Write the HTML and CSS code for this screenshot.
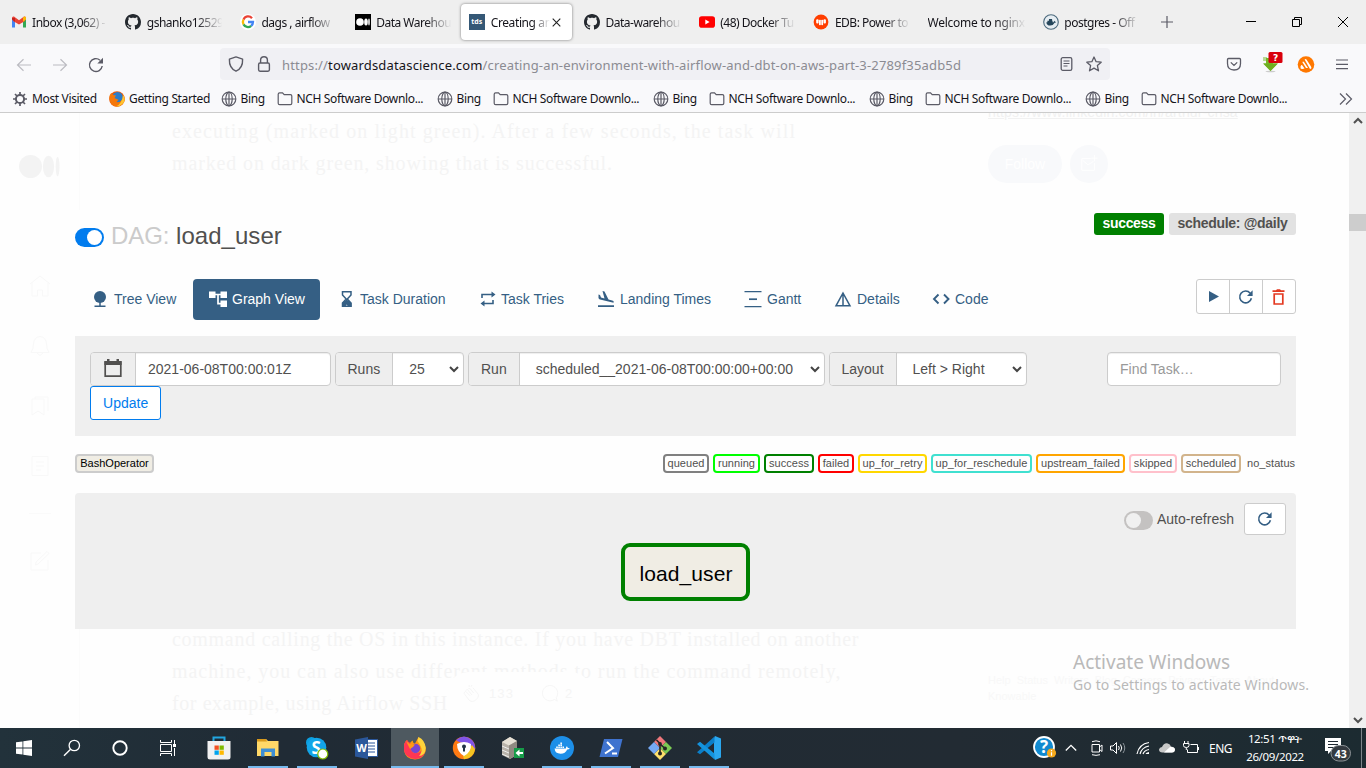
FILE: index.html
```html
<!DOCTYPE html>
<html lang="en">
<head>
<meta charset="utf-8">
<title>Creating an environment with Airflow and DBT on AWS</title>
<link rel="stylesheet" href="styles.css">
</head>
<body>
<svg class="defs" width="0" height="0">
  <symbol id="globe" viewBox="0 0 16 16"><g fill="none" stroke="#5b5b66" stroke-width="1.2"><circle cx="8" cy="8" r="6.8"/><ellipse cx="8" cy="8" rx="3.2" ry="6.8"/><path d="M1.2 8h13.6M8 1v14"/></g></symbol>
  <symbol id="folder" viewBox="0 0 16 16"><path d="M1.2 12.3V3.2Q1.2 1.8 2.6 1.8H5.5L7.2 3.6H13.4Q14.8 3.6 14.8 5V12.3Q14.8 13.6 13.4 13.6H2.6Q1.2 13.6 1.2 12.3Z" fill="none" stroke="#5b5b66" stroke-width="1.2"/></symbol>
  <symbol id="github" viewBox="0 0 16 16"><path fill="#24292f" d="M8 0C3.58 0 0 3.58 0 8c0 3.54 2.29 6.53 5.47 7.59.4.07.55-.17.55-.38 0-.19-.01-.82-.01-1.49-2.01.37-2.53-.49-2.69-.94-.09-.23-.48-.94-.82-1.13-.28-.15-.68-.52-.01-.53.63-.01 1.08.58 1.23.82.72 1.21 1.87.87 2.33.66.07-.52.28-.87.51-1.07-1.78-.2-3.64-.89-3.64-3.95 0-.87.31-1.59.82-2.15-.08-.2-.36-1.02.08-2.12 0 0 .67-.21 2.2.82.64-.18 1.32-.27 2-.27s1.36.09 2 .27c1.53-1.04 2.2-.82 2.2-.82.44 1.1.16 1.92.08 2.12.51.56.82 1.27.82 2.15 0 3.07-1.87 3.75-3.65 3.95.29.25.54.73.54 1.48 0 1.07-.01 1.93-.01 2.2 0 .21.15.46.55.38A8.01 8.01 0 0 0 16 8c0-4.42-3.58-8-8-8z"/></symbol>
  <symbol id="redo" viewBox="0 0 16 16"><path d="M13.4 9.3A5.9 5.9 0 1 1 12.2 4.2" fill="none" stroke="currentColor" stroke-width="1.6"/><path d="M14.6 1.2V7H9Z" fill="currentColor"/></symbol>
  <symbol id="whale" viewBox="0 0 24 24"><path d="M3 12H17.2Q17 10 18.2 9Q19.5 9.8 19.5 11.2Q21 11 22 11.7Q21 13.3 18.8 13.2Q16.5 18.5 10.5 18.5Q3.5 18.5 3 12ZM5 9.3h2v2H5zM7.6 9.3h2v2h-2zM10.2 9.3h2v2h-2zM12.8 9.3h2v2h-2zM7.6 6.9h2v2h-2zM10.2 6.9h2v2h-2zM10.2 4.5h2v2h-2z"/></symbol>
  <symbol id="caret" viewBox="0 0 10 8"><path d="M1 2L5 6L9 2" fill="none" stroke="#444" stroke-width="2"/></symbol>
</svg>
<div class="screen">
  <header class="tabs">
    <div class="tab"><svg class="fav" viewBox="0 0 16 16"><path d="M1 3.5V13.5H4V6.8Z" fill="#4285f4"/><path d="M15 3.5V13.5H12V6.8Z" fill="#34a853"/><path d="M1 4Q1 2 3 2.5L8 6.3L13 2.5Q15 2 15 4L14 7L8 10.5L2 7Z" fill="#ea4335"/><path d="M12 3.5Q15 1.2 15 4.2V5.5L12 7.8Z" fill="#fbbc04"/><path d="M1 4V5.5L4 7.8V4Z" fill="#c5221f"/></svg><span>Inbox (3,062) -</span></div>
    <div class="tab"><svg class="fav"><use href="#github"/></svg><span>gshanko12529</span></div>
    <div class="tab"><svg class="fav" viewBox="0 0 16 16"><circle cx="8" cy="8" r="8" fill="#fff"/><g fill="none" stroke-width="2.3"><path d="M12 4.2A5 5 0 0 0 3.5 5.6" stroke="#ea4335"/><path d="M3.5 5.6A5 5 0 0 0 3.5 10.4" stroke="#fbbc05"/><path d="M3.5 10.4A5 5 0 0 0 11.2 11.8" stroke="#34a853"/><path d="M11.2 11.8A5 5 0 0 0 13 8H8" stroke="#4285f4"/></g></svg><span>dags , airflow</span></div>
    <div class="tab"><svg class="fav" viewBox="0 0 16 16"><path d="M0 0h16v16H0z"/><g fill="#fff"><circle cx="5" cy="8" r="3.8"/><ellipse cx="11" cy="8" rx="1.8" ry="3.6"/><ellipse cx="14" cy="8" rx=".8" ry="3.4"/></g></svg><span>Data Warehou</span></div>
    <div class="tab active"><i class="fav tds">tds</i><span>Creating an</span><svg class="tab-x" viewBox="0 0 9 9"><path d="M.7.7L8.3 8.3M8.3.7L.7 8.3" stroke="#222" stroke-width="1.1"/></svg></div>
    <div class="tab"><svg class="fav"><use href="#github"/></svg><span>Data-warehou</span></div>
    <div class="tab"><svg class="fav" viewBox="0 0 16 16"><rect y="2.3" width="16" height="11.4" rx="2.8" fill="#f00"/><path d="M6.3 5.5V10.5L10.6 8Z" fill="#fff"/></svg><span>(48) Docker Tu</span></div>
    <div class="tab"><svg class="fav" viewBox="0 0 16 16"><circle cx="8" cy="8" r="7.4" fill="#ff3e00"/><g fill="#fff"><rect x="3.2" y="5.2" width="2.4" height="4.4" rx="1"/><rect x="6" y="5.8" width="1.8" height="5.4" rx=".8"/><rect x="8.3" y="5.8" width="1.8" height="5.4" rx=".8"/><rect x="10.5" y="5.2" width="2.4" height="4.4" rx="1"/></g></svg><span>EDB: Power to</span></div>
    <div class="tab plain"><span>Welcome to nginx</span></div>
    <div class="tab"><svg class="fav" viewBox="0 0 16 16"><circle cx="8" cy="8" r="7.3" fill="#e6edf2" stroke="#4c6a7d" stroke-width="1.1"/><g transform="translate(1.8 2) scale(.52)" fill="#24455a"><path d="M3 12H17.2Q17 10 18.2 9Q19.5 9.8 19.5 11.2Q21 11 22 11.7Q21 13.3 18.8 13.2Q16.5 18.5 10.5 18.5Q3.5 18.5 3 12ZM5 9h10v3H5zM8 6h6v4H8z"/></g></svg><span>postgres - Off</span></div>
    <svg class="newtab" viewBox="0 0 12 12"><path d="M6 0V12M0 6H12" stroke="#5b5b66" stroke-width="1.2"/></svg>
    <div class="winctl">
      <svg viewBox="0 0 10 10"><path d="M0 4.5H10" stroke="#000"/></svg>
      <svg viewBox="0 0 10 10"><path d="M.5 2.5H7.5V9.5H.5ZM2.5 2.5V.5H9.5V7.5H7.5" fill="none" stroke="#000"/></svg>
      <svg viewBox="0 0 10 10"><path d="M0 0L10 10M10 0L0 10" stroke="#000"/></svg>
    </div>
  </header>

  <div class="navbar">
    <div class="navbtns">
      <svg width="16" height="16" viewBox="0 0 16 16"><path d="M15 8H1.5M7.5 2.2L1.5 8L7.5 13.8" fill="none" stroke="#bcbcc2" stroke-width="1.2"/></svg>
      <svg width="16" height="16" viewBox="0 0 16 16"><path d="M1 8H14.5M8.5 2.2L14.5 8L8.5 13.8" fill="none" stroke="#bcbcc2" stroke-width="1.2"/></svg>
      <svg width="16" height="16" viewBox="0 0 16 16"><path d="M14.2 9A6.4 6.4 0 1 1 12 3.2" fill="none" stroke="#5b5b66" stroke-width="1.4"/><path d="M15 .8V6.5H9.3Z" fill="#5b5b66"/></svg>
    </div>
    <div class="url">
      <svg width="16" height="16" viewBox="0 0 16 16"><path d="M8 .9L14.6 3.2Q15 12 8 15.2Q1 12 1.4 3.2Z" fill="none" stroke="#5b5b66" stroke-width="1.4" stroke-linejoin="round"/></svg>
      <svg width="16" height="16" viewBox="0 0 16 16"><rect x="2.6" y="7" width="10.8" height="8.2" rx="1.4" fill="none" stroke="#5b5b66" stroke-width="1.4"/><path d="M4.6 7V4Q4.6.8 8 .8T11.4 4V7" fill="none" stroke="#5b5b66" stroke-width="1.4"/></svg>
      <span class="address">https://<b>towardsdatascience.com</b>/creating-an-environment-with-airflow-and-dbt-on-aws-part-3-2789f35adb5d</span>
      <svg width="14" height="16" viewBox="0 0 14 16"><rect x="1.2" y="1.700" width="10.6" height="12.6" rx="1.6" fill="none" stroke="#5b5b66" stroke-width="1.3"/><path d="M3.500 5h6M3.500 7.5h6M3.500 10h4" stroke="#5b5b66" stroke-width="1.1"/></svg>
      <svg width="16" height="16" viewBox="0 0 16 16"><path d="M8 1L10.1 5.7L15.2 6.2L11.4 9.6L12.5 14.8L8 12.1L3.5 14.8L4.6 9.6L.8 6.2L5.9 5.7Z" fill="none" stroke="#5b5b66" stroke-width="1.3" stroke-linejoin="round"/></svg>
    </div>
    <div class="ext">
      <svg width="16" height="16" viewBox="0 0 16 16"><path d="M2.5 1.5H13.5Q14.5 1.5 14.5 2.5V6.5Q14.5 13 8 13Q1.5 13 1.5 6.5V2.5Q1.5 1.5 2.5 1.5ZM4.8 5.4L8 8.4L11.2 5.4" fill="none" stroke="#5b5b66" stroke-width="1.3"/></svg>
      <svg width="24" height="24" viewBox="0 0 24 24"><path d="M3 7.500H6V5H13V10.500H18L10.500 18L3 10.500H6V7.500Z" fill="#76b82a"/><path d="M4 4v4M6 4v4" stroke="#76b82a"/><ellipse cx="10.500" cy="18.500" rx="5" ry=".8" fill="#ccc"/><path d="M3.500 10.500H17.500L10.500 18Z" fill="#6fae1f"/><rect x="8.500" y="-1" width="14" height="11" rx="1.5" fill="#d9000c"/><text x="15.500" y="7.800" text-anchor="middle" class="qm">?</text></svg>
      <svg width="18" height="18" viewBox="0 0 18 18"><circle cx="9" cy="8.500" r="8.3" fill="#ff7800"/><path d="M3.500 10.500Q3 13.500 5.500 13L7.500 12.500L5 9Q4 8.500 3.500 10.500ZM5.500 6.500L9 12L11 12L7 6Q5.500 5 5.500 6.500ZM7.600 3.500L13 13Q15.200 12.500 14 10.500L9.500 3.500Q8.500 2.500 7.600 3.500Z" fill="#fff"/></svg>
      <svg width="14" height="16" viewBox="0 0 14 16"><path d="M3 3h12M3 7.3h12M3 11.6h12" stroke="#5b5b66" stroke-width="1.2"/></svg>
    </div>
  </div>

  <div class="bookmarks">
    <a class="mv"><svg viewBox="0 0 16 16"><circle cx="8" cy="8" r="4.1" fill="none" stroke="#5b5b66" stroke-width="2"/><path d="M8 1v3M8 12v3M1 8h3M12 8h3M3 3l2 2M11 11l2 2M3 13l2-2M11 5l2-2" stroke="#5b5b66" stroke-width="1.7"/></svg>Most Visited</a>
    <a class="gs"><svg viewBox="0 0 16 16"><circle cx="8" cy="8" r="7.8" fill="#e8590c"/><circle cx="8.6" cy="6.2" r="5.3" fill="#2b7cc9"/><path d="M.3 7Q.5 3 2.5 2L4 4L7 4.5L5.5 7L9.5 8.8L7.5 11Q12 12 14 7Q14.6 4 13 2.2Q17 6 15 11Q12 16 7 15.6Q1 14.5.3 7Z" fill="#f5780a"/><path d="M14 4Q17 8 14.5 12Q11 15.8 7 15.4Q13 13 14 4Z" fill="#ffc52f"/></svg>Getting Started</a>
    <a class="bg"><svg><use href="#globe"/></svg>Bing</a><a class="fd"><svg><use href="#folder"/></svg>NCH Software Downlo...</a>
    <a class="bg"><svg><use href="#globe"/></svg>Bing</a><a class="fd"><svg><use href="#folder"/></svg>NCH Software Downlo...</a>
    <a class="bg"><svg><use href="#globe"/></svg>Bing</a><a class="fd"><svg><use href="#folder"/></svg>NCH Software Downlo...</a>
    <a class="bg"><svg><use href="#globe"/></svg>Bing</a><a class="fd"><svg><use href="#folder"/></svg>NCH Software Downlo...</a>
    <a class="bg"><svg><use href="#globe"/></svg>Bing</a><a class="fd"><svg><use href="#folder"/></svg>NCH Software Downlo...</a>
    <svg class="more" viewBox="0 0 14 12"><path d="M1 .5L6.5 6L1 11.5M7 .5L12.5 6L7 11.5" fill="none" stroke="#5b5b66" stroke-width="1.2"/></svg>
  </div>

  <div class="viewport">
    <main class="page">
      <nav class="rail">
        <svg class="mlogo" viewBox="0 0 41 24"><g fill="#f3f3f3"><circle cx="11.5" cy="11.500" r="11.5"/><ellipse cx="29.5" cy="11.500" rx="5.6" ry="10.8"/><ellipse cx="38.6" cy="11.500" rx="1.9" ry="9.8"/></g></svg>
        <svg viewBox="0 0 20 20"><path d="M0 8L10 0L20 8M2 6.5V20H7.5V14H12.5V20H18V6.5"/></svg>
        <svg viewBox="0 0 20 20"><path d="M1 16.5Q3.5 13 3.5 8Q4 1 10 .5Q16 1 16.500 8Q16.500 13 19 16.500ZM7 17L10 19.500L13 17"/></svg>
        <svg viewBox="0 0 20 20"><path d="M2 3H14V19L8 15L2 19ZM5 3V1H18V15"/></svg>
        <svg viewBox="0 0 20 20"><path d="M2 .5H18V19.500H2ZM6 6h8M6 10h8M6 14h5"/></svg>
        <hr>
        <svg viewBox="0 0 20 20"><path d="M11 2H1V19H18V9M6 11L17 .5L19 2.500L8 13L5.500 14Z"/></svg>
      </nav>
      <article class="story">
        <p>executing (marked on light green). After a few seconds, the task will<br><span class="u2">marked on dark green, showing that is successful.</span></p>
        <p class="lower"><span class="l1">command calling the OS in this instance. If you have DBT installed on another</span><br><span class="l2">machine, you can also use different methods to run the command remotely,</span><br><span class="l3">for example, using Airflow SSH</span></p>
        <div class="claps"><svg viewBox="0 0 20 20"><path d="M2 9L8 17Q12 20 16 16T17 9L12 3M2 9L4 7L9 12M4 6L6 5L11 11M7 4L9 4L13 9M8 0v2M11 0l-1 2"/></svg><span>133</span><svg viewBox="0 0 20 20"><path d="M15 16A8.500 8.500 0 1 1 17 14L18 18Z"/></svg><span>2</span></div>
      </article>
      <aside class="side">
        <div class="link">https://www.linkedin.com/in/arthur-chsa</div>
        <div class="follow"><span>Follow</span><i><svg viewBox="0 0 20 20"><path d="M12 4H2V17H16V9M3 6L9 11L15 7M16 0V7M12.500 3.500H19.500"/></svg></i></div>
        <div class="foot">Help&nbsp; Status&nbsp; Writers&nbsp; Blog&nbsp; Careers&nbsp; Privacy&nbsp; Terms&nbsp; About<br>Knowable</div>
      </aside>

      <section class="lightbox">
        <div class="dag-head">
          <span class="switch on"></span>
          <h1><em>DAG:</em> load_user</h1>
          <span class="badge ok">success</span><span class="badge">schedule: @daily</span>
        </div>
        <div class="dag-nav">
          <div class="links">
            <a><svg viewBox="0 0 18 18"><circle cx="9" cy="7" r="6" fill="currentColor"/><path d="M9 12V16M3.500 16.300H14.500" stroke="currentColor" stroke-width="1.500"/></svg>Tree View</a>
            <a class="sel"><svg viewBox="0 0 18 18"><path fill="currentColor" d="M0 1.500H6.500V8H0ZM11.500 1.500H18V8H11.500ZM11.500 10.500H18V17H11.500Z"/><path d="M6 4.500H12M9 4.500V13.700H12" fill="none" stroke="currentColor" stroke-width="1.700"/></svg>Graph View</a>
            <a><svg viewBox="0 0 18 18"><path d="M5.500 1.800H14V5L10.300 9L14 13V16.200H5.500V13L9.200 9L5.500 5Z" fill="none" stroke="currentColor" stroke-width="1.500"/><path d="M5 17V13L9.700 9.500L14.500 13V17H11.500L9.700 14.500L8 17Z" fill="currentColor"/></svg>Task Duration</a>
            <a><svg viewBox="0 0 18 18"><path d="M4 8V4.500H14.500M15 10V13.500H4.500" fill="none" stroke="currentColor" stroke-width="1.600"/><path d="M13.500 1.500L17.500 4.500L13.500 7.500ZM6.500 10.500L2.500 13.500L6.500 16.500Z" fill="currentColor"/></svg>Task Tries</a>
            <a><svg viewBox="0 0 18 18"><path d="M1 15.300H17V17H1ZM1.500 4.500L3 5L4 7.500L7.500 8.500L5.500 1L7.500 1.500L11.500 9.500L16 10.800Q17.200 11.500 16.500 12.800L3 9.500Q1.800 9 1.500 8Z" fill="currentColor"/></svg>Landing Times</a>
            <a><svg viewBox="0 0 18 18"><path d="M.5 1.700H17.500M.5 16.700H17.500" stroke="currentColor" stroke-width="1.300"/><path d="M5 9.200H13" stroke="currentColor" stroke-width="1.700"/></svg>Gantt</a>
            <a><svg viewBox="0 0 18 18"><path d="M9 3L16 15.800H2ZM9 3V15.800" fill="none" stroke="currentColor" stroke-width="1.500"/></svg>Details</a>
            <a><svg viewBox="0 0 18 18"><path d="M6.500 4.500L2 9L6.500 13.500M12 4.500L16.500 9L12 13.500" fill="none" stroke="currentColor" stroke-width="1.900"/></svg>Code</a>
          </div>
          <div class="actions">
            <i><svg viewBox="0 0 16 16"><path d="M4 2V13L14 7.500Z" fill="currentColor"/></svg></i>
            <i><svg><use href="#redo"/></svg></i>
            <i class="del"><svg viewBox="0 0 16 16"><path d="M3.200 5H11.800V15H3.200Z" fill="none" stroke="currentColor" stroke-width="1.700"/><path d="M1.500 1.200H5L6 .2H9L10 1.200H13.500V3H1.500Z" fill="currentColor"/></svg></i>
          </div>
        </div>
        <div class="filters">
          <div class="row">
            <div class="group date"><label><svg viewBox="0 0 20 20"><path d="M2.200 3H17.800V17.200H2.200Z" fill="none" stroke="currentColor" stroke-width="1.700"/><path d="M1.400 2H18.600V6H1.400ZM4 0h2.500v3H4zM13.500 0H16v3h-2.500z" fill="currentColor"/></svg></label><span>2021-06-08T00:00:01Z</span></div>
            <div class="group runs"><label>Runs</label><span>25</span><svg class="caret"><use href="#caret"/></svg></div>
            <div class="group run"><label>Run</label><span>scheduled__2021-06-08T00:00:00+00:00</span><svg class="caret"><use href="#caret"/></svg></div>
            <div class="group layout"><label>Layout</label><span>Left &gt; Right</span><svg class="caret"><use href="#caret"/></svg></div>
            <div class="group find"><span>Find Task…</span></div>
          </div>
          <button class="update">Update</button>
        </div>
        <div class="legend">
          <span class="op">BashOperator</span>
          <span class="queued">queued</span><span class="running">running</span><span class="success">success</span><span class="failed">failed</span><span class="retry">up_for_retry</span><span class="resched">up_for_reschedule</span><span class="upstream">upstream_failed</span><span class="skipped">skipped</span><span class="scheduled">scheduled</span><span class="none">no_status</span>
        </div>
        <div class="canvas">
          <div class="tools"><span class="switch"></span><span class="lbl">Auto-refresh</span><i><svg><use href="#redo"/></svg></i></div>
          <div class="node">load_user</div>
        </div>
      </section>
      <div class="activate"><div>Activate Windows</div><p>Go to Settings to activate Windows.</p></div>
    </main>
    <div class="scroll"><svg viewBox="0 0 10 8"><path d="M1 6L5 2L9 6" fill="none" stroke="#505050" stroke-width="2"/></svg><i></i><svg viewBox="0 0 10 8"><path d="M1 2L5 6L9 2" fill="none" stroke="#505050" stroke-width="2"/></svg></div>
  </div>

  <footer class="taskbar">
    <div class="sys">
      <svg viewBox="0 0 16 16" width="16" height="16"><path fill="#fff" d="M0 2.300L6.500 1.400V7.600H0ZM7.300 1.300L16 0V7.600H7.300ZM0 8.400H6.500V14.600L0 13.700ZM7.300 8.400H16V16L7.300 14.700Z"/></svg>
      <svg viewBox="0 0 18 18" width="18" height="18"><circle cx="11.300" cy="6.500" r="5.200" fill="none" stroke="#fff" stroke-width="1.300"/><path d="M7.600 10.200L1 16.800" stroke="#fff" stroke-width="1.400"/></svg>
      <svg viewBox="0 0 16 16" width="16" height="16"><circle cx="8" cy="8" r="6.700" fill="none" stroke="#fff" stroke-width="1.900"/></svg>
      <svg viewBox="0 0 16 16" width="16" height="16"><path d="M.5 0V2.500H11.500V0M.5 4.500H11.500V11.500H.5ZM.5 16V13.500H11.500V16M14.500 0V4M14.500 8V16" fill="none" stroke="#fff"/><path d="M13 4h3v3h-3z" fill="#fff"/></svg>
    </div>
    <div class="apps">
      <i><svg viewBox="0 0 24 24"><path d="M6.500 5V1.500H17.500V5" fill="none" stroke="#22a6e0" stroke-width="2"/><path d="M.5 5H23.500V21Q23.500 23.500 21 23.500H3Q.5 23.500.5 21Z" fill="#f1f1f1"/><path d="M7.500 9.500h4.300v4.300H7.500z" fill="#f25022"/><path d="M12.500 9.500h4.300v4.300h-4.300z" fill="#7fba00"/><path d="M7.500 14.500h4.300v4.300H7.500z" fill="#00a4ef"/><path d="M12.500 14.500h4.300v4.300h-4.300z" fill="#ffb900"/></svg></i>
      <i class="run"><svg viewBox="0 0 24 24"><path d="M1 3H10L12 5H22.500V20H1Z" fill="#ffd868"/><path d="M1 3H10L11 5.500H1Z" fill="#d99a1c"/><path d="M5 20.500V12.500H19V20.500H15.500V16H8.500V20.500Z" fill="#3f8fd4"/></svg></i>
      <i class="run"><svg viewBox="0 0 24 24"><circle cx="6.500" cy="6.500" r="5.500" fill="#0c9fe0"/><circle cx="16" cy="16" r="6" fill="#0c9fe0"/><circle cx="11.500" cy="11.500" r="9.800" fill="#12a5e8"/><text x="11.300" y="17.500" text-anchor="middle" class="skype">S</text><circle cx="17.800" cy="18" r="5" fill="#fff" stroke="#7fba00" stroke-width="1.200"/></svg></i>
      <i><svg viewBox="0 0 24 24"><path d="M12 3.500H23.500V20.500H12Z" fill="#fff" stroke="#2b579a"/><path d="M14 7h7M14 10h7M14 13h7M14 16h7" stroke="#2b579a"/><path d="M1 3.500L14 1V23L1 20.500Z" fill="#2b579a"/><text x="7.500" y="16" text-anchor="middle" class="word">W</text></svg></i>
      <i class="run focus"><svg viewBox="0 0 24 24"><path d="M1 14Q.5 6 4 4Q5 6 7 7Q8 5 10 4.500Q9.500 7 12 7.500Q14 4 15.500 1Q17.500 3 18.500 6L20.500 7Q24 12 22 17Q19 23.500 12 23.500Q2 23 1 14Z" fill="#ff980e"/><path d="M1 14Q.5 6 4 4Q5 6 7 7Q8.500 8 7.500 11Q8 18 14 17Q20 16 19 10Q25 17 18 21.500Q11 25 5 20.500Q1.500 18 1 14Z" fill="#ff3653"/><path d="M15.500 1Q22 4 22.800 12Q22 20 16 20Q20 15 18 11Q16 7 14.500 5Z" fill="#ffd43b"/><circle cx="12.500" cy="12.500" r="4.700" fill="#7745d2"/><path d="M3 5L7 8L12 8.500L10 11L7 13Z" fill="#ff9a16"/></svg></i>
      <i class="run"><svg viewBox="0 0 24 24"><circle cx="12" cy="12" r="11.200" fill="#ff7a12"/><path d="M4 4Q12-3 20 4Q24 9 23 14L18 9L7 6Z" fill="#8054e8"/><path d="M23 13Q22 22 12 23.200L11 20L20 9Z" fill="#f5c522"/><path d="M5 8Q12 4 19 8Q19.500 16 12 20Q5 16 5 8Z" fill="#fff"/><circle cx="12" cy="10.500" r="2" fill="#243447"/><path d="M11 11h2v4.500h-2z" fill="#243447"/></svg></i>
      <i><svg viewBox="0 0 24 24"><path d="M1 6L9 1L16 5V19L9 23L1 19Z" fill="#b9b3aa"/><path d="M1 6L9 1L16 5L8 9.500Z" fill="#e7e1d6"/><path d="M8 9.500L16 5V19L8 23Z" fill="#8f8981"/><path d="M1 10l7 3M1 14l7 3M1 18l7 3" stroke="#eee"/><path d="M13 12H23V22H13Z" fill="#169b48"/><path d="M14.500 17L18.500 13.500V16H22V18H18.500V20.500Z" fill="#fff"/></svg></i>
      <i class="run"><svg viewBox="0 0 24 24"><circle cx="12" cy="12" r="12" fill="#1d8fe8"/><g transform="translate(2.200 3) scale(.8)" fill="#fff"><use href="#whale" width="24" height="24"/></g></svg></i>
      <i class="run"><svg viewBox="0 0 24 24"><path d="M5 3H23.500L19 21H.5Z" fill="#3f73cf"/><path d="M8 6L14 12L6 17.500M13 17.500H18" fill="none" stroke="#fff" stroke-width="2"/></svg></i>
      <i class="run"><svg viewBox="0 0 24 24"><path d="M12 0L18 6L12 12L6 6Z" fill="#f0787c"/><path d="M18 6L24 12L18 18L12 12Z" fill="#7ccb54"/><path d="M12 12L18 18L12 24L6 18Z" fill="#ffe06b"/><path d="M6 6L12 12L6 18L0 12Z" fill="#74a9f5"/><path d="M8.500 4L12 7.500V18M12 8L17 12.500" fill="none" stroke="#252525" stroke-width="1.600"/><g fill="#252525"><circle cx="12" cy="8" r="1.900"/><circle cx="12" cy="17.500" r="2"/><circle cx="17" cy="12.500" r="2"/></g></svg></i>
      <i class="run"><svg viewBox="0 0 24 24"><path d="M18 0L24 2.500V21.500L18 24L17 22V2Z" fill="#2aa7ef"/><path d="M17.500.5V6.500L3 18.300L0 16.200Z" fill="#0b7fc9"/><path d="M0 8L3 5.700L17.500 17.500V23.500Z" fill="#1493dd"/></svg></i>
    </div>
    <div class="tray">
      <svg class="t1" viewBox="0 0 24 24"><circle cx="11" cy="11" r="10" fill="#1189cf" stroke="#fff" stroke-width="1.800"/><text x="11" y="17" text-anchor="middle" class="help">?</text><circle cx="18.500" cy="17" r="4.600" fill="#f6a91c"/><path d="M18.500 14v1.300M18.500 16.200v3.500" stroke="#fff" stroke-width="1.200"/></svg>
      <svg class="t2" viewBox="0 0 12 16"><path d="M.8 10.500L6 5.300L11.200 10.500" fill="none" stroke="#fff" stroke-width="1.300"/></svg>
      <svg class="t3" viewBox="0 0 16 16"><path d="M3 4.500H10.500V12H3ZM10.500 7L13 5V11.500L10.500 9.500M3 1.700Q7 0 11 1.700M3 14.700Q7 16 11 14.700" fill="none" stroke="#fff"/></svg>
      <svg class="t4" viewBox="0 0 16 16"><path d="M.5 6H3L6.500 2.500V13.500L3 10H.5Z" fill="none" stroke="#fff"/><path d="M8.500 6Q10 8 8.500 10M10.500 4.500Q13 8 10.500 11.500" fill="none" stroke="#fff"/><path d="M13 3Q16.500 8 13 13" fill="none" stroke="#8d959b"/></svg>
      <svg class="t5" viewBox="0 0 16 16"><path d="M1 14Q3 4 13 2.500M4 14Q5.500 7.500 13 6M7 14Q8 10.500 13 9.500" fill="none" stroke="#fff" stroke-width="1.200"/><path d="M9.500 14Q10 12.500 13 12V14Z" fill="#fff"/></svg>
      <svg class="t6" viewBox="0 0 16 16"><path d="M3.500 12.500Q0 12.500 0 9.500Q.5 7 3 7Q4.500 3 8 3.200Q11 3.500 12 6.500Q16 7 16 10Q15.500 12.500 13 12.500Z" fill="#c8c8c8"/><path d="M5 12.500L11 7Q16 6.500 16 10Q15.500 12.500 13 12.500Z" fill="#fff"/></svg>
      <svg class="t7" viewBox="0 0 16 16"><path d="M7.500 4.500H14.500V12.500H4.500V9.500M15.500 7V10M1.500 1V3.500M5 1V3.500M.5 3.500H6V5.500Q6 7.500 3.300 7.500Q.5 7.500 .5 5.500ZM3.300 7.500V10" fill="none" stroke="#fff"/></svg>
      <span class="lang">ENG</span>
      <span class="clock">12:51 ጥዋት<br>26/09/2022</span>
      <svg class="bell" viewBox="0 0 28 26"><path d="M1 1H17V14H7L4 17V14H1Z" fill="#fff"/><path d="M4 4.500H14M4 7.500H14M4 10.500H11" stroke="#212b33" stroke-width="1.200"/><rect x="7" y="8.500" width="19.500" height="15.500" rx="7.700" fill="#343a40" stroke="#8d9397"/><text x="16.700" y="20.500" text-anchor="middle" class="cnt">43</text></svg>
      <i class="peek"></i>
    </div>
  </footer>
</div>
</body>
</html>
```
FILE: styles.css
```css
* { box-sizing: border-box; }
body { margin: 0; font-family: "Noto Sans", "Open Sans", sans-serif; }
i { font-style: normal; }
svg { display: block; flex: none; overflow: visible; }
.defs { position: absolute; }
.screen { width: 1366px; height: 768px; display: flex; flex-direction: column; overflow: hidden; background: #fff; }

.tabs { height: 44px; flex: none; display: flex; align-items: center; background: #efefef; font-size: 12px; letter-spacing: -.5px; color: #15141a; }
.tab { width: 114.7px; flex: none; height: 36px; padding-left: 10.600px; display: flex; align-items: center; gap: 5.500px; white-space: nowrap; }
.tab span { width: 82px; -webkit-mask-image: linear-gradient(90deg, #000 60%, transparent 92%); mask-image: linear-gradient(90deg, #000 60%, transparent 92%); }
.tab.plain { padding-left: 10px; letter-spacing: -.25px; }
.tab.plain span { width: 100px; -webkit-mask-image: linear-gradient(90deg, #000 68%, transparent 98%); mask-image: linear-gradient(90deg, #000 68%, transparent 98%); }
.fav { width: 16px; height: 16px; flex: none; }
.tab.active { margin: 0 1px 0 2px; width: 111.7px; padding-left: 8px; gap: 6px; background: #fff; border-radius: 4px; box-shadow: 0 0 3px rgba(0,0,0,.5); }
.tab.active span { width: 59px; margin-right: -1px; letter-spacing: -.4px; -webkit-mask-image: linear-gradient(90deg, #000 70%, transparent); mask-image: linear-gradient(90deg, #000 70%, transparent); }
.tds { background: #355876; color: #fff; font: bold 7px/15px "Noto Sans"; text-align: center; letter-spacing: 0; }
.tab-x { width: 9px; height: 9px; margin-left: -3px; }
.newtab { width: 12px; height: 12px; margin-left: 14px; }
.winctl { display: flex; margin-left: auto; gap: 36px; padding-right: 18px; }
.winctl svg { width: 10px; height: 10px; }

.navbar { height: 44px; flex: none; display: flex; align-items: center; background: #f9f9fb; padding-bottom: 3px; }
.navbtns { display: flex; gap: 20px; width: 220px; padding-left: 16px; }
.url { width: 890px; height: 32px; margin-top: -1px; padding: 0 8px; display: flex; align-items: center; background: #f0f0f4; border-radius: 4px; gap: 12px; }
.address { flex: 1; padding-top: 1px; font-size: 13px; white-space: nowrap; color: #8b8b92; letter-spacing: .16px; margin-left: -2px; }
.address b { font-weight: 400; color: #15141a; }
.ext { display: flex; align-items: center; padding-left: 116px; gap: 18px; }
.ext svg:nth-child(3) { margin-left: -5px; }
.qm { font: bold 9px "DejaVu Sans"; fill: #fff; }

.bookmarks { height: 24px; flex: none; display: flex; align-items: center; background: #f9f9fb; font-size: 12px; letter-spacing: -.35px; color: #15141a; padding: 0 13px 3px 12px; white-space: nowrap; }
.bookmarks a { display: flex; align-items: center; gap: 4px; flex: none; }
.bookmarks a svg { width: 16px; height: 16px; }
.mv { width: 97px; }
.gs { width: 111.500px; }
.bg { width: 56px; }
.fd { width: 160px; }
.more { width: 14px; height: 12px; margin-left: auto; }

.viewport { height: 616px; flex: none; display: flex; border-top: 1px solid #ccc; }
.page { width: 1349px; position: relative; display: grid; grid-template-columns: 80px 908px 1fr; overflow: hidden; background: #fefefe; }
.scroll { width: 17px; background: #f0f0f0; display: flex; flex-direction: column; align-items: center; padding: 4px 0; }
.scroll svg { width: 10px; height: 8px; }
.scroll i { width: 17px; height: 17px; margin: 89px 0 auto; background: #cdcdcd; }

.rail { border-right: 1px solid #fbfbfb; padding-top: 42px; display: flex; flex-direction: column; align-items: center; }
.rail svg { width: 20px; height: 20px; margin-bottom: 40px; fill: none; stroke: #f8f8f8; stroke-width: 1; }
.rail .mlogo { width: 41px; height: 24px; margin-bottom: 97px; stroke: none; }
.rail hr { width: 22px; margin: -3px 0 37px; border: 0; border-top: 1px solid #fafafa; }
.story { padding-left: 92px; color: #f4f4f4; font: 20px/32px "Liberation Serif", serif; white-space: nowrap; letter-spacing: 1.1px; }
.story p { margin: 2px 0 0; }
.story .u2 { letter-spacing: .87px; }
.story .lower { margin-top: 444px; letter-spacing: .58px; }
.story .l1 { letter-spacing: .72px; }
.story .l2 { letter-spacing: .95px; }
.claps { position: absolute; left: 447px; top: 559px; width: 145px; height: 43px; border-radius: 22px; background: #fefefe; display: flex; align-items: center; padding-left: 15px; gap: 9px; font: 13px "Liberation Sans"; color: #f5f5f5; }
.claps svg { width: 18px; height: 18px; fill: none; stroke: #f4f4f4; }
.claps span { margin-right: 18px; }
.claps span + svg { margin-right: -3px; }
.side { color: #f7f7f7; font: 14px/20px "Liberation Sans", sans-serif; }
.link { margin-top: -11px; color: #f1f1f1; text-decoration: underline; letter-spacing: .18px; }
.follow { display: flex; gap: 8px; margin-top: 23px; color: #fff; }
.follow span { width: 74px; line-height: 38px; height: 38px; border-radius: 19px; background: #f8f9fb; text-align: center; }
.follow i { width: 38px; height: 38px; border-radius: 50%; background: #f8f9fb; display: grid; place-items: center; }
.follow svg { width: 18px; height: 18px; fill: none; stroke: #fff; }
.foot { margin-top: 489px; font-size: 11px; line-height: 16px; color: #f8f8f8; }

.lightbox { position: absolute; left: 75px; top: 97px; width: 1221px; height: 419px; background: #fefefe; font: 14px/20px "Liberation Sans", Arial, sans-serif; color: #51504f; }
.dag-head { height: 69px; display: flex; align-items: flex-start; padding-top: 3px; }
.switch { width: 29px; height: 19px; border-radius: 10px; background: #c4c2c1; padding: 2px; flex: none; display: flex; }
.switch::before { content: ""; width: 15px; height: 15px; border-radius: 50%; background: #f0f0f0; margin-left: 0; }
.switch.on { background: #017cee; margin-top: 15px; }
.switch.on::before { background: #fff; margin-left: 10px; }
h1 { margin: 9px auto 0 7px; font-size: 24px; line-height: 28px; font-weight: 400; letter-spacing: .05px; }
h1 em { font-style: normal; color: #cbcbcb; letter-spacing: -.1px; }
.badge { height: 22px; line-height: 21px; width: 127px; text-align: center; border-radius: 3px; background: #e2e2e2; font-weight: 700; letter-spacing: -.3px; margin-left: 5px; }
.badge.ok { background: #008000; color: #fff; width: 70px; }
.dag-nav { height: 57px; display: flex; justify-content: space-between; align-items: flex-start; color: #355f84; }
.links { display: grid; grid-template-columns: 118px 128px 141px 119px 147px 90px 98px 90px; }
.links a { height: 41px; padding: 0 0 2px 16px; display: flex; gap: 5px; align-items: center; white-space: nowrap; }
.links svg { width: 18px; height: 18px; }
.links .sel { width: 127px; background: #355f84; color: #fff; border-radius: 4px; }
.actions { display: flex; border: 1px solid #ccc; border-radius: 3px; background: #fff; }
.actions i { width: 33px; height: 33px; display: grid; place-items: center; border-left: 1px solid #ccc; }
.actions i:first-child { border: 0; width: 32px; }
.actions svg, .tools svg { width: 16px; height: 16px; }
.actions .del { color: #e43921; }
.filters { height: 100px; background: #efefef; padding: 16px 15px; }
.row { display: flex; gap: 4px; }
.group { height: 34px; border: 1px solid #ccc; border-radius: 4px; background: #fff; display: flex; align-items: center; white-space: nowrap; box-shadow: inset 0 1px 1px rgba(0,0,0,.07); }
.group label { height: 32px; line-height: 32px; background: #eee; border-right: 1px solid #ccc; padding: 0 12px; border-radius: 3px 0 0 3px; display: flex; align-items: center; }
.group span { padding-left: 12px; }
.group label svg { width: 20px; height: 20px; }
.date { width: 240.500px; }
.runs { width: 129.500px; } .run { width: 356.500px; } .layout { width: 198px; }
.runs span, .run span, .layout span { padding-left: 16px; }
.find { width: 174px; margin-left: auto; color: #999; }
.caret { width: 10px; height: 8px; margin: 0 4px 0 auto; }
.update { display: block; width: 71.400px; height: 34px; border: 1px solid #017cee; border-radius: 3px; color: #017cee; background: #fff; font: 14px "Liberation Sans"; padding: 0; }
.legend { height: 57px; padding-top: 18px; display: flex; gap: 4px; align-items: flex-start; font-size: 11px; letter-spacing: .05px; }
.legend span { height: 19px; line-height: 15px; border: 2px solid; border-radius: 4px; white-space: nowrap; text-align: center; -webkit-text-fill-color: #51504f; }
.legend .op { margin-right: auto; border-color: #ccc; background: #f0ede4; width: 79px; -webkit-text-fill-color: #000; letter-spacing: 0; }
.queued { color: #808080; width: 46px; }
.running { color: #00ff00; width: 47px; }
.success { color: #008000; width: 50px; }
.failed { color: #ff0000; width: 36px; }
.retry { color: #ffd700; width: 69px; }
.resched { color: #40e0d0; width: 101px; }
.upstream { color: #ffa500; width: 89px; }
.skipped { color: #ffc0cb; width: 48px; }
.scheduled { color: #d2b48c; width: 60px; }
.legend .none { border-color: transparent; width: 51px; }
.canvas { height: 136px; background: #efefef; border-radius: 4px 4px 0 0; padding: 10px 10px 0; }
.tools { display: flex; justify-content: flex-end; height: 32px; }
.tools .switch { margin-top: 8px; }
.lbl { margin: 6px 10px 0 4px; }
.tools i { width: 42px; height: 32px; border: 1px solid #ccc; border-radius: 3px; background: #fff; display: grid; place-items: center; color: #355f84; }
.node { width: 129px; height: 58px; margin: 8px 0 0 536px; border: 4px solid #008000; border-radius: 9px; background: #f0ede4; color: #000; font-size: 21px; line-height: 53px; text-align: center; text-indent: 1px; letter-spacing: .08px; }
.activate { position: absolute; left: 1073px; top: 537px; color: #b9b9b9; white-space: nowrap; font-size: 19px; line-height: 25px; }
.activate p { margin: 0; font-size: 14px; line-height: 20px; letter-spacing: .12px; }

.taskbar { height: 40px; flex: none; display: flex; background: linear-gradient(90deg, #22323b, #202b35 20%, #222b33 70%, #1c2b31); color: #fff; }
.sys { display: flex; width: 195px; align-items: center; }
.sys svg { margin: 0 16px; }
.sys svg:nth-child(2) { margin: 0 15px; }
.apps { display: flex; gap: 1px; }
.apps i { width: 48px; height: 40px; display: flex; align-items: center; justify-content: center; }
.apps svg { width: 24px; height: 24px; }
.apps .run { width: 48px; background: linear-gradient(#76b9ed, #76b9ed) center bottom / 40px 2px no-repeat; }
.apps .focus { background: linear-gradient(#76b9ed, #76b9ed) bottom / 48px 2px no-repeat #4e5960; }
.skype { font: bold 17px "Open Sans"; fill: #fff; }
.word { font: bold 11px "Open Sans"; fill: #fff; }
.help { font: bold 17px "Open Sans"; fill: #fff; }
.cnt { font: bold 10.500px "Open Sans"; fill: #fff; }
.tray { margin-left: auto; display: flex; align-items: center; font-size: 12px; }
.tray svg { width: 16px; height: 16px; }
.tray .t1 { width: 24px; height: 24px; margin-right: 8px; }
.tray .t2 { width: 12px; margin-right: 12px; }
.tray .t3 { margin-right: 5px; }
.tray .t4 { margin-right: 10px; }
.tray .t5 { margin-right: 7px; }
.tray .t6 { margin-right: 8px; }
.tray .t7 { margin-right: 10px; }
.lang { width: 35px; letter-spacing: -.5px; }
.clock { width: 62px; line-height: 18px; text-align: center; letter-spacing: -.35px; white-space: nowrap; font-size: 11.500px; }
.tray .bell { width: 28px; height: 26px; margin: 4px 9px 0 18px; }
.peek { width: 5px; height: 40px; border-left: 1px solid #7c858a; }
```
